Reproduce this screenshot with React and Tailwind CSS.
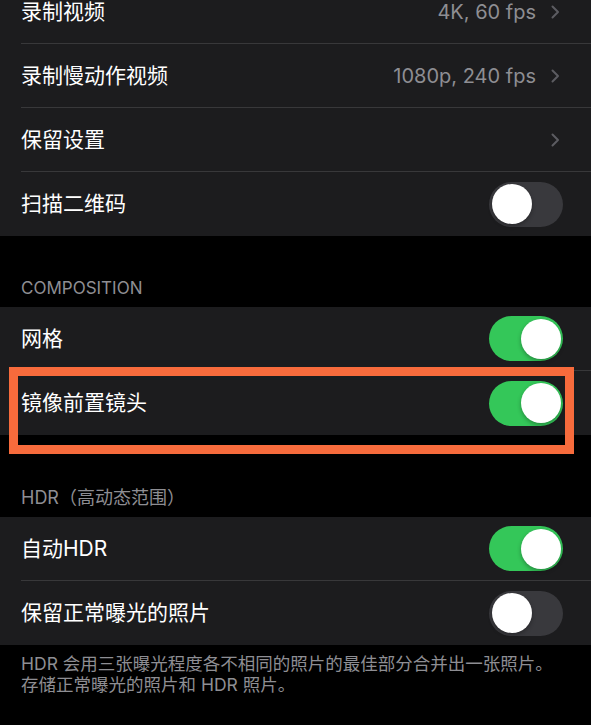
import React from 'react';

const font = { fontFamily: 'Inter, "Noto Sans CJK SC", sans-serif' };

function Toggle({ on }) {
  return (
    <div
      className={`flex h-[45px] w-[74px] shrink-0 items-center rounded-full p-[2.5px] ${
        on ? 'justify-end bg-[#34c759]' : 'justify-start bg-[#39393d]'
      }`}
    >
      <div className="h-[40px] w-[40px] rounded-full bg-white shadow-[0_2px_4px_rgba(0,0,0,0.3)]" />
    </div>
  );
}

function Chevron() {
  return (
    <svg width="9" height="14" viewBox="0 0 9 14" fill="none" className="ml-[15px]">
      <path d="M1.5 1.5L7 7L1.5 12.5" stroke="#5c5c61" strokeWidth="2" strokeLinecap="round" strokeLinejoin="round" />
    </svg>
  );
}

function Row({ label, value, chevron, toggle, last }) {
  return (
    <div className="flex h-[64px] pl-[21px]">
      <div
        className={`flex flex-1 items-center justify-between ${
          toggle === undefined ? 'pr-[31px]' : 'pr-[28px]'
        } ${last ? '' : 'border-b border-[#38383a]'}`}
      >
        <span className="text-[21px] text-white">{label}</span>
        <div className="flex items-center">
          {value && <span className="text-[20px] text-[#8e8e93]">{value}</span>}
          {chevron && <Chevron />}
          {toggle !== undefined && <Toggle on={toggle} />}
        </div>
      </div>
    </div>
  );
}

function Header({ children, height, size }) {
  return (
    <div className={`flex ${height} items-end px-[21px] pb-[9px]`}>
      <span className={`${size} leading-[20px] text-[#8e8e93]`}>{children}</span>
    </div>
  );
}

export default function App() {
  return (
    <div className="min-h-screen w-full overflow-hidden bg-black" style={font}>
      <div className="-mt-[20px] bg-[#1c1c1e]">
        <Row label="录制视频" value="4K, 60 fps" chevron />
        <Row label="录制慢动作视频" value="1080p, 240 fps" chevron />
        <Row label="保留设置" chevron />
        <Row label="扫描二维码" toggle={false} last />
      </div>

      <Header height="h-[71px]" size="text-[17px]">COMPOSITION</Header>

      <div className="relative bg-[#1c1c1e]">
        <Row label="网格" toggle={true} />
        <Row label="镜像前置镜头" toggle={true} last />
        <div className="absolute left-[9px] top-[60px] h-[87px] w-[565px] border-[9px] border-[#f76b3c]" />
      </div>

      <Header height="h-[82px]" size="text-[18px]">HDR（高动态范围）</Header>

      <div className="bg-[#1c1c1e]">
        <Row label="自动HDR" toggle={true} />
        <Row label="保留正常曝光的照片" toggle={false} last />
      </div>

      <div className="px-[21px] pt-[8px] text-[17.5px] leading-[21px] text-[#8e8e93]">
        <p>HDR 会用三张曝光程度各不相同的照片的最佳部分合并出一张照片。</p>
        <p>存储正常曝光的照片和 HDR 照片。</p>
      </div>
    </div>
  );
}
